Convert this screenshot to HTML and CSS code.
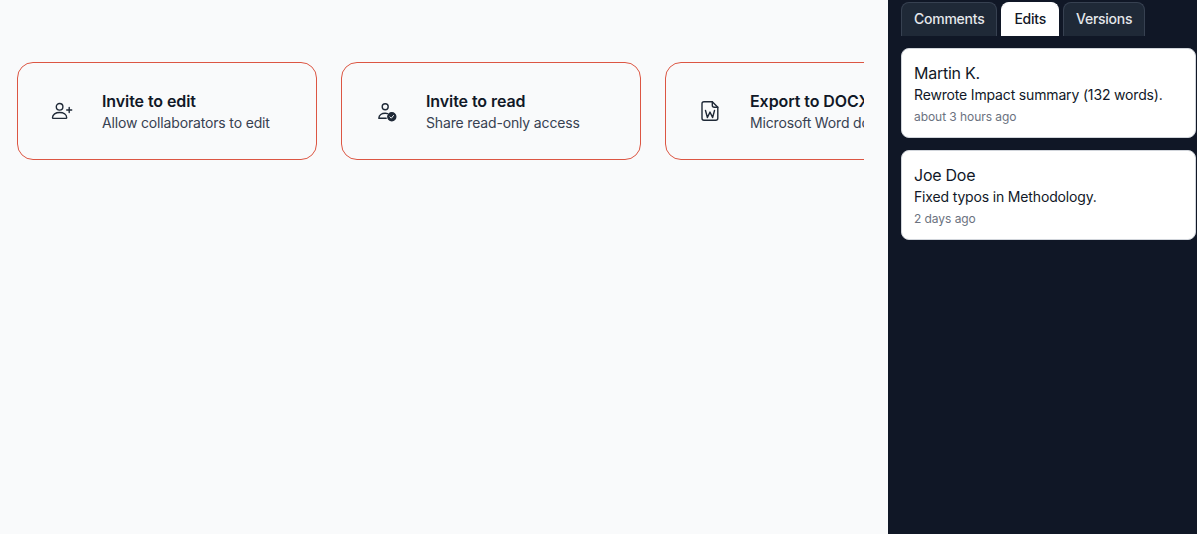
FILE: index.html
```html
<!DOCTYPE html>
<html lang="en">
<head>
    <meta charset="UTF-8">
    <meta name="viewport" content="width=device-width, initial-scale=1.0">
    <title>Document actions</title>
    <link rel="stylesheet" href="styles.css">
</head>
<body>
    <div class="wrapper">
        <main class="main">
            <div class="actions">
                <div class="action-card">
                    <div class="action-icon">
                        <svg class="icon" viewBox="0 0 24 24" fill="none" stroke="currentColor" stroke-width="1.4" stroke-linecap="round" stroke-linejoin="round">
                            <circle cx="9.600" cy="7.800" r="3.300"/>
                            <path d="M2.500 18.700c0-3.300 3.200-5.200 7.100-5.200s7.100 1.900 7.100 5.200c0 .4-.3.700-.7.700H3.200c-.4 0-.7-.3-.7-.7z"/>
                            <path d="M19.200 8.500v5M16.700 11h5"/>
                        </svg>
                    </div>
                    <div class="action-text">
                        <div class="action-title">Invite to edit</div>
                        <div class="action-sub">Allow collaborators to edit</div>
                    </div>
                </div>
                <div class="action-card">
                    <div class="action-icon">
                        <svg class="icon" viewBox="0 0 24 24" fill="none" stroke="currentColor" stroke-width="1.4" stroke-linecap="round" stroke-linejoin="round">
                            <circle cx="11.200" cy="7.800" r="3"/>
                            <path d="M4.800 19.300c.2-3.200 3-5.100 6.400-5.100 1 0 1.600.1 2.400.4M4.800 19.300h7.400"/>
                            <circle cx="17.800" cy="17.800" r="4" fill="currentColor"/>
                            <path d="M16 17.900l1.300 1.300 2.200-2.700" stroke="#f9fafb" stroke-width="1"/>
                        </svg>
                    </div>
                    <div class="action-text">
                        <div class="action-title">Invite to read</div>
                        <div class="action-sub">Share read-only access</div>
                    </div>
                </div>
                <div class="action-card">
                    <div class="action-icon">
                        <svg class="icon" viewBox="0 0 24 24" fill="none" stroke="currentColor" stroke-width="1.400" stroke-linecap="round" stroke-linejoin="round">
                            <path d="M6 2.700h8.300l5.500 5.500v11.100c0 1.100-.9 2-2 2H6c-1.100 0-2-.9-2-2V4.700c0-1.100.9-2 2-2z"/>
                            <path d="M14.300 2.700v3.500c0 1.100.9 2 2 2h3.500"/>
                            <path d="M7.500 11.500l1.900 7 2.600-5.400 2.600 5.400 1.900-7"/>
                        </svg>
                    </div>
                    <div class="action-text">
                        <div class="action-title">Export to DOCX</div>
                        <div class="action-sub">Microsoft Word document</div>
                    </div>
                </div>
            </div>
        </main>
        <aside class="sidebar">
            <div class="tabs">
                <div class="tab">Comments</div>
                <div class="tab tab-active">Edits</div>
                <div class="tab">Versions</div>
            </div>
            <div class="edit-list">
                <div class="edit-card">
                    <div class="edit-name">Martin K.</div>
                    <div class="edit-desc">Rewrote Impact summary (132 words).</div>
                    <div class="edit-time">about 3 hours ago</div>
                </div>
                <div class="edit-card">
                    <div class="edit-name">Joe Doe</div>
                    <div class="edit-desc">Fixed typos in Methodology.</div>
                    <div class="edit-time">2 days ago</div>
                </div>
            </div>
        </aside>
    </div>
</body>
</html>
```

FILE: styles.css
```css
body {
    margin: 0;
    font-family: Inter, "Liberation Sans", sans-serif;
    background-color: #f9fafb;
    color: #111827;
}

.wrapper {
    display: flex;
    height: 100vh;
    overflow: hidden;
}

.main {
    width: 888px;
    flex-shrink: 0;
    box-sizing: border-box;
    padding: 62px 24px 0 17px;
}

.actions {
    display: flex;
    gap: 24px;
    overflow: hidden;
}

.action-card {
    display: flex;
    align-items: center;
    flex-shrink: 0;
    gap: 16px;
    width: 300px;
    height: 98px;
    box-sizing: border-box;
    padding: 0 20px;
    border: 1px solid #dc5643;
    border-radius: 16px;
}

.action-icon {
    display: flex;
    align-items: center;
    justify-content: center;
    flex-shrink: 0;
    width: 48px;
    height: 48px;
}

.icon {
    width: 24px;
    height: 24px;
    color: #1f2937;
}

.action-text {
    padding-top: 2px;
}

.action-title {
    font-size: 16px;
    font-weight: 600;
    line-height: 22px;
    letter-spacing: -0.08px;
    white-space: nowrap;
}

.action-sub {
    font-size: 14px;
    line-height: 22px;
    letter-spacing: -0.16px;
    color: #374151;
    white-space: nowrap;
}

.sidebar {
    flex: 1;
    box-sizing: border-box;
    padding: 2px 1px 0 13px;
    background-color: #101726;
}

.tabs {
    display: flex;
    gap: 4px;
    height: 34px;
}

.tab {
    display: flex;
    align-items: center;
    box-sizing: border-box;
    padding: 0 12px 2px;
    font-size: 14px;
    font-weight: 500;
    letter-spacing: -0.25px;
    color: #e5e7eb;
    background-color: #1f2937;
    border: 1px solid #374151;
    border-bottom: 0;
    border-radius: 8px 8px 0 0;
}

.tab-active {
    color: #111827;
    background-color: #ffffff;
    border-color: #ffffff;
}

.edit-list {
    display: flex;
    flex-direction: column;
    gap: 12px;
    margin-top: 12px;
}

.edit-card {
    box-sizing: border-box;
    height: 90px;
    padding: 13px 12px 0;
    background-color: #ffffff;
    border: 1px solid #d1d5db;
    border-radius: 8px;
}

.edit-name {
    font-size: 16px;
    line-height: 22px;
    letter-spacing: -0.25px;
}

.edit-desc {
    font-size: 14px;
    line-height: 21px;
    letter-spacing: -0.16px;
    color: #111827;
}

.edit-time {
    font-size: 12px;
    line-height: 24px;
    letter-spacing: -0.06px;
    color: #6b7280;
}
```
